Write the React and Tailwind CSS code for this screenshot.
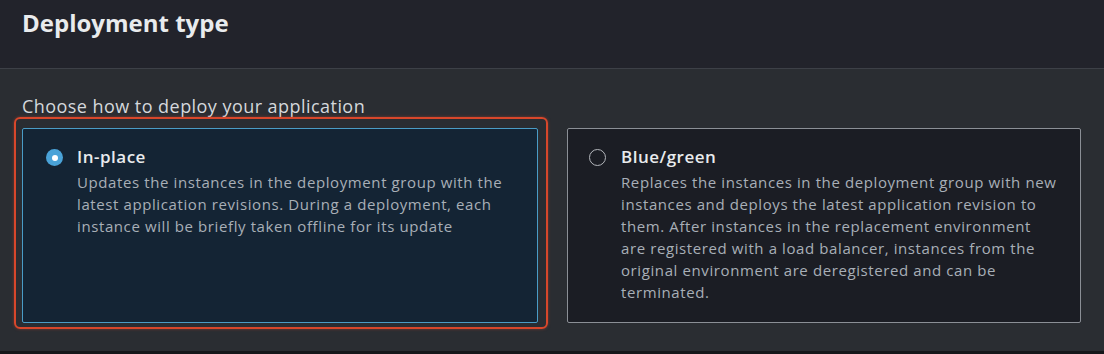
export default function App() {
  return (
    <div className="w-[1104px] h-[354px] flex flex-col bg-[#2a2d32] overflow-hidden" style={{ fontFamily: '"Open Sans", "Noto Sans", sans-serif' }}>
      <div className="h-[69px] shrink-0 bg-[#22232b] border-b border-[#3d4047] px-[22px] pt-[7px]">
        <h2 className="text-[24px] leading-[32px] font-bold text-[#e9ebed]">Deployment type</h2>
      </div>
      <div className="flex-1 px-[22px] pt-[25px]">
        <div className="text-[18px] leading-[24px] tracking-[0.45px] text-[#d5d8dc] mb-[10px]">Choose how to deploy your application</div>
        <div className="flex gap-[29px]">
          <div className="relative w-[516px]">
            <div className="absolute -left-[8px] -top-[11px] -right-[10px] -bottom-[6px] border-[2.5px] border-[#d8472b] rounded-[6px] shadow-[0_0_3px_rgba(216,71,43,0.5)]" />
            <div className="h-[195px] bg-[#142434] border border-[#4a9cc6] rounded-[2px] pl-[23px] pt-[16px] flex gap-[14px]">
              <div className="mt-[4px] w-[17px] h-[17px] rounded-full bg-[#4aa3d8] flex items-center justify-center shrink-0">
                <div className="w-[6px] h-[6px] rounded-full bg-white" />
              </div>
              <div>
                <div className="text-[17px] leading-[24px] tracking-[0.5px] font-semibold text-[#e9ebed]">In-place</div>
                <p className="mt-[2px] text-[15px] leading-[22px] tracking-[0.6px] text-[#a8afb7] w-[437px]">Updates the instances in the deployment group with the latest application revisions. During a deployment, each instance will be briefly taken offline for its update</p>
              </div>
            </div>
          </div>
          <div className="w-[514px] h-[195px] bg-[#1b1d24] border border-[#8b8f96] rounded-[2px] pl-[21px] pt-[16px] flex gap-[15px]">
            <div className="mt-[4px] w-[17px] h-[17px] rounded-full border-[1.5px] border-[#b4b7bc] shrink-0" />
            <div>
              <div className="text-[17px] leading-[24px] tracking-[0.5px] font-semibold text-[#e9ebed]">Blue/green</div>
              <p className="mt-[2px] text-[15px] leading-[22px] tracking-[0.6px] text-[#a8afb7] w-[437px]">Replaces the instances in the deployment group with new instances and deploys the latest application revision to them. After instances in the replacement environment are registered with a load balancer, instances from the original environment are deregistered and can be terminated.</p>
            </div>
          </div>
        </div>
      </div>
      <div className="h-[3px] shrink-0 bg-[#15171a]" />
    </div>
  );
}
